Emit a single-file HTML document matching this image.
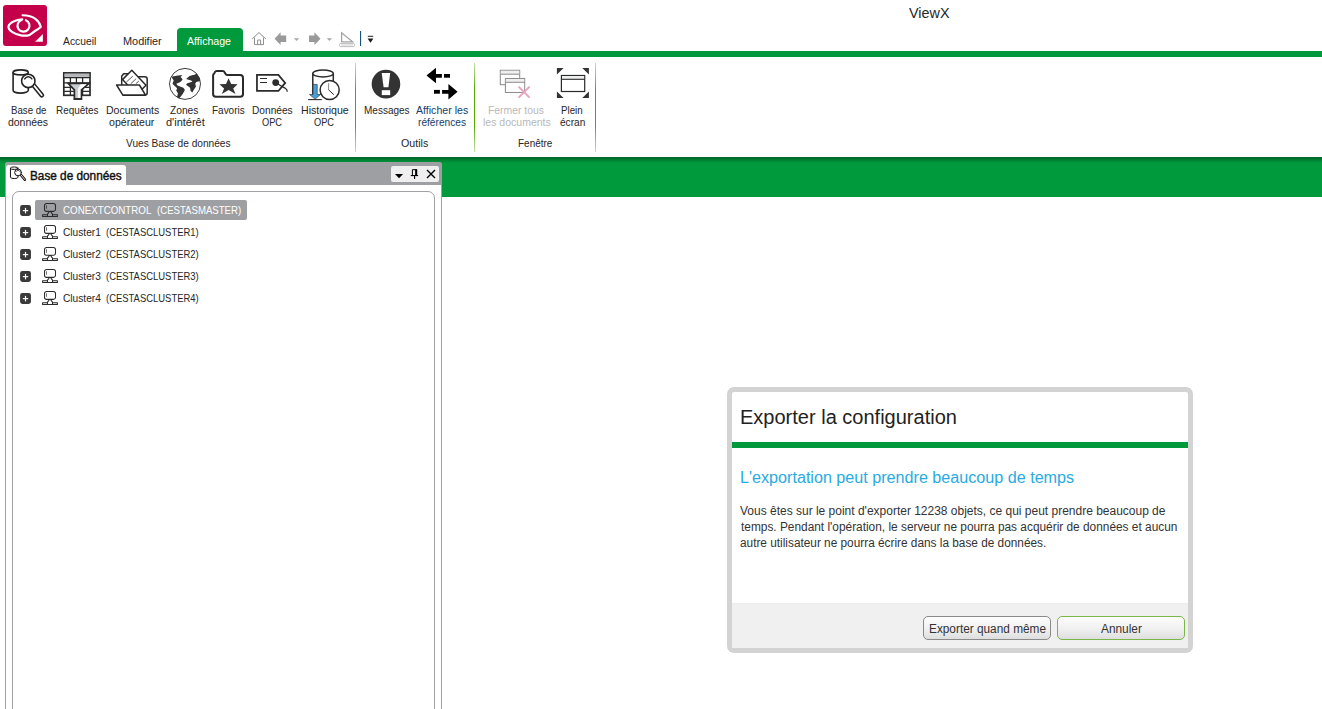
<!DOCTYPE html>
<html><head><meta charset="utf-8">
<style>
*{margin:0;padding:0;box-sizing:border-box}
html,body{width:1322px;height:709px;overflow:hidden;background:#fff}
body{position:relative;font-family:"Liberation Sans",sans-serif;color:#262626}
.a{position:absolute}
.t{position:absolute;white-space:pre;transform-origin:0 0;font-family:"Liberation Sans",sans-serif}
svg{position:absolute;overflow:visible}
</style></head><body>
<!-- logo -->
<div class="a" style="left:3px;top:5px;width:44px;height:41px;background:#c4004b;border-radius:3px"></div>
<!-- active tab + green rule -->
<div class="a" style="left:177px;top:28px;width:65.5px;height:24px;background:#009a3d;border-radius:4px 4px 0 0"></div>
<div class="a" style="left:0;top:51px;width:1322px;height:6px;background:#009a3d"></div>
<!-- ribbon separators -->
<div class="a sep" style="left:355px"></div><div class="a sep" style="left:474px"></div><div class="a sep" style="left:595px"></div>
<style>.sep{top:63px;width:1px;height:89px;background:linear-gradient(rgba(85,167,0,.35),#55a700 30%,#55a700 70%,rgba(85,167,0,.35))}</style>
<!-- green band -->
<div class="a" style="left:0;top:157px;width:1322px;height:40px;background:linear-gradient(#00662a 0,#00682a 1px,#007830 2px,#008836 4px,#009a3d 6px)"></div>
<!-- panel -->
<div class="a" style="left:5px;top:162px;width:436.5px;height:560px;background:#fff;border:1px solid #a0a1a5;border-radius:3px 3px 0 0"></div>
<div class="a" style="left:5px;top:162px;width:436.5px;height:22.5px;background:#9e9fa3;border-radius:3px 3px 0 0"></div>
<div class="a" style="left:6px;top:165px;width:120px;height:21px;background:#fff;border-radius:3px 3px 0 0"></div>
<div class="a" style="left:391px;top:165.8px;width:48px;height:16.3px;background:#efefef;border-radius:2px"></div>
<div class="a" style="left:12px;top:191px;width:423px;height:540px;border:1px solid #a0a1a5;border-radius:7px"></div>
<!-- tree selection -->
<div class="a" style="left:35px;top:200px;width:212px;height:20px;background:#9e9fa3;border-radius:2px"></div>
<!-- dialog -->
<div class="a" style="left:727px;top:387px;width:466px;height:266px;background:#d3d3d3;border-radius:7px"></div>
<div class="a" style="left:732px;top:392px;width:456px;height:256px;background:#fff;border-radius:2px"></div>
<div class="a" style="left:732px;top:442px;width:456px;height:6px;background:#009a3d"></div>
<div class="a" style="left:732px;top:603px;width:456px;height:45px;background:#f0f0f0;border-top:1px solid #ececec;border-radius:0 0 2px 2px"></div>
<div class="a" style="left:923px;top:616px;width:128px;height:24px;border:1px solid #8a8a8a;border-radius:5px;background:linear-gradient(#fdfdfd,#f0f0f0 55%,#dedede)"></div>
<div class="a" style="left:1057px;top:616px;width:128px;height:24px;border:1px solid #7ab648;border-radius:5px;background:linear-gradient(#fdfdfd,#f0f0f0 55%,#dedede)"></div>
<!-- logo eye -->
<svg style="left:0;top:0" width="52" height="52" viewBox="0 0 52 52" fill="none" stroke="#fff" stroke-width="2.15" stroke-linecap="round" stroke-linejoin="round">
<path d="M25.9 20.2A6 6 0 1 1 21.6 20"/>
<path d="M22.3 19.3C16.5 19.6 9.2 22.6 8.5 26.5C8.2 30.3 14.5 34.7 22 35.6L27.5 35.6C31.5 35.2 33 31.3 38.3 28.9L40.8 27C39.6 21.8 34.5 15.2 22.6 15.2"/>
<path d="M42.9 34.1V41.8H35.1Z" fill="#fff" stroke="none"/>
</svg>
<!-- quick access toolbar -->
<svg style="left:245px;top:26px" width="140" height="26" viewBox="245 26 140 26">
<path d="M252.2 38.9L259 32.6L265.8 38.9M254.5 37.5V44.6H263.5V37.5M257.6 44.6V40H260.6V44.6" fill="none" stroke="#8f8f8f" stroke-width="1"/>
<path d="M274.6 38.7L280.6 32.3V35.4H286.2V42H280.6V45Z" fill="#9a9a9a"/>
<path d="M293.8 38.2H299.2L296.5 41Z" fill="#a8a8a8"/>
<path d="M320.5 38.7L314.4 32.3V35.4H309V42H314.4V45Z" fill="#9a9a9a"/>
<path d="M326.7 38.2H332.1L329.4 41Z" fill="#a8a8a8"/>
<path d="M341.6 32.8V41.8H352.6Z" fill="none" stroke="#a3a3a3" stroke-width="1.3"/>
<rect x="339.6" y="43.6" width="14.8" height="3" rx="0.8" fill="#fff" stroke="#b5b5b5" stroke-width="0.9"/>
<path d="M342 44.3v1.6M344 44.3v1.6M346 44.3v1.6M348 44.3v1.6M350 44.3v1.6M352 44.3v1.6" stroke="#b5b5b5" stroke-width="0.7"/>
<rect x="360" y="31" width="1.1" height="15" fill="#14507a"/>
<rect x="367.8" y="35.8" width="5.4" height="1" fill="#222"/>
<path d="M367.6 38.6H373.4L370.5 42.8Z" fill="#1a1a1a"/>
</svg>
<!-- ribbon icon 1: database + magnifier -->
<svg style="left:6px;top:64px" width="44" height="40" viewBox="6 64 44 40" fill="none" stroke="#242424" stroke-width="1.6" stroke-linecap="round">
<ellipse cx="20.7" cy="72.4" rx="7.6" ry="2.5"/>
<path d="M13.1 72.5V90.2A7.6 2.9 0 0 0 28.3 90.2V87.5"/>
<path d="M33.8 85.4L41.8 95.2" stroke-width="4.8"/>
<path d="M33.8 85.4L41.8 95.2" stroke="#fff" stroke-width="1.7"/>
<circle cx="28.3" cy="80.9" r="6.7" fill="#fff"/>
<path d="M24.7 78.9A4.1 4.1 0 0 1 31.9 78.9" stroke-width="1.4"/>
</svg>
<!-- ribbon icon 2: table + funnel -->
<svg style="left:56px;top:64px" width="44" height="40" viewBox="56 64 44 40" fill="none" stroke="#2a2a2a" stroke-width="1.5">
<rect x="63.8" y="72.9" width="26.2" height="22.4" fill="#fff" stroke-width="1.7"/>
<rect x="64.6" y="73.7" width="24.6" height="3.2" fill="#b4b6b9" stroke="none"/>
<path d="M64 77.6H90M64 82.9H90M64 87.4H90M64 91.3H90" stroke-width="1.3"/>
<path d="M70.4 77.6V95M76.4 77.6V95M82.6 77.6V95" stroke-width="1.3"/>
<path d="M68.1 83.3H89.1L81.4 89.9V98.9H74.4V89.9Z" fill="#c9cdd0" stroke-linejoin="miter" stroke-width="1.7"/>
<path d="M80.6 84.3H86.6L80.4 89.5V98H78.2V88.5Z" fill="#fff" stroke="none"/>
<path d="M73.6 99.2H82.2" stroke-width="1.4"/>
</svg>
<!-- ribbon icon 3: folder with documents -->
<svg style="left:110px;top:64px" width="44" height="40" viewBox="110 64 44 40" fill="#fff" stroke="#2a2a2a" stroke-width="1.5" stroke-linejoin="round">
<path d="M121.7 85V76.2L123.6 73.7H128.6L131 76.8H144.8A2.4 2.4 0 0 1 147.2 79.2V92.8A2.4 2.4 0 0 1 144.8 95.2H123Z"/>
<path d="M131.8 70.3L146 85.2L136.8 94.5L122.5 79.6Z"/>
<path d="M126.4 82L132.8 76.1M130.9 83.7L135.9 78.9M135.9 83.7L138.8 81.1" stroke-width="0.8"/>
<path d="M116.6 85H139.4L145.4 94.9H122.7Z"/>
</svg>
<!-- ribbon icon 4: globe -->
<svg style="left:163px;top:64px" width="44" height="40" viewBox="163 64 44 40">
<defs><clipPath id="gc"><circle cx="185" cy="83.9" r="15.6"/></clipPath></defs>
<circle cx="185" cy="83.9" r="15.5" fill="#fff" stroke="#333" stroke-width="0.95"/>
<g clip-path="url(#gc)" fill="#333">
<path d="M171.3 76.8Q176 75.6 182.3 74.9L180.6 77.1L182.6 79.2Q181.8 81.2 179.9 82.2L176.3 83.7Q177 85.4 178.8 86L183.3 87.7Q185.2 89 184.7 90.6L182.7 94L179.4 98.3L176.9 97.5L177.9 93.3L176.2 90.5L177.1 88.3L173.7 85L172.5 83.7L173.7 80.4Z"/>
<path d="M186.1 78.9L189.5 76.1Q192 75 194.6 74.7L197 73.3L201 79.8L199.3 81.2L196.3 82.1L195.2 83.7L196 86.6L194 89.4L192.3 92.6L190.6 91.1L190.1 87.7L186 84.7L187.3 83.2L192.4 81.8L191.2 80.4Z"/>
</g>
</svg>
<!-- ribbon icon 5: favourites folder -->
<svg style="left:206px;top:64px" width="44" height="40" viewBox="206 64 44 40">
<path d="M213.1 75.2Q213.1 74.2 214.2 73.6L215 71.9Q215.5 70.9 216.8 70.9H222.6Q224 70.9 224.6 72.2L225.6 73.9Q226.3 75.1 227.8 75.1H240.2A2.8 2.8 0 0 1 243 77.9V94A2.8 2.8 0 0 1 240.2 96.8H215.9A2.8 2.8 0 0 1 213.1 94Z" fill="#fff" stroke="#2a2a2a" stroke-width="2" stroke-linejoin="round"/>
<path d="M228.6 78.3L231.2 84.1L237.6 84.3L233.2 88.4L235.5 93.9L228.6 90L221.8 93.9L224.1 88.4L219.4 84.3L226 84.1Z" fill="#333"/>
</svg>
<!-- ribbon icon 6: tag -->
<svg style="left:250px;top:64px" width="44" height="40" viewBox="250 64 44 40" fill="none" stroke="#2a2a2a">
<path d="M256.95 74.85H278.4L285.2 82.9L278.4 90.95H256.95Z" stroke-width="1.75" fill="#fff"/>
<path d="M260.1 78.55H267M260.1 82.45H267" stroke-width="1.1"/>
<circle cx="275.7" cy="82.6" r="3.4" fill="#2e2e2e" stroke="none"/>
<path d="M277.5 83.6C281 86.2 283 87 285.3 88.3C286.8 89.2 287.3 90.3 287.3 91.8" stroke-width="1.25"/>
</svg>
<!-- ribbon icon 7: historian cylinder + clock -->
<svg style="left:302px;top:64px" width="44" height="40" viewBox="302 64 44 40" fill="none" stroke="#2a2a2a" stroke-width="1.5">
<path d="M312.8 73.4V95M333.3 73.4V84"/>
<ellipse cx="323.05" cy="73.4" rx="10.25" ry="3.5" fill="#fff"/>
<path d="M313.1 84.4H317.2V94.5H320.6L315.1 99.1L309.5 94.5H313.1Z" fill="#4a9fd8" stroke="#3a3a3a" stroke-width="0.7"/>
<path d="M308.1 99.6H321.8" stroke-width="1.1"/>
<circle cx="329.65" cy="89.95" r="9.55" fill="#fff"/>
<path d="M328.6 83.2V89.9" stroke="#8a8a8a" stroke-width="1"/>
<path d="M328.6 89.9L333.9 94.7" stroke-width="1"/>
</svg>
<!-- ribbon icon 8: messages -->
<svg style="left:362px;top:62px" width="104" height="42" viewBox="362 62 104 42">
<circle cx="385.95" cy="84.1" r="14.3" fill="#333"/>
<path d="M381.7 73H390.2L388.4 87.2H383.6Z" fill="#fff"/>
<rect x="381.8" y="90.2" width="8.4" height="4.9" fill="#fff"/>
<!-- ribbon icon 9: reference arrows -->
<path d="M426.5 75.55L436 67.8V74H441.9V77.7H436V83.3Z" fill="#000"/>
<rect x="444" y="74" width="6" height="3.7" fill="#000"/>
<rect x="434" y="89.9" width="5.9" height="3.8" fill="#000"/>
<path d="M457.6 91.75L448.4 84.1V89.9H442.1V93.7H448.4V99.4Z" fill="#000"/>
</svg>
<!-- ribbon icon 10: close all (disabled) + icon 11: full screen -->
<svg style="left:492px;top:62px" width="104" height="42" viewBox="492 62 104 42" fill="none">
<rect x="500.3" y="70.3" width="19.4" height="14.4" fill="#fff" stroke="#8f8f8f" stroke-width="1.05"/>
<rect x="500.8" y="70.8" width="18.4" height="3.2" fill="#eef0f0"/>
<path d="M500.3 74.2H519.7" stroke="#8f8f8f" stroke-width="1.05"/>
<rect x="505.4" y="78.5" width="19.3" height="14" fill="#fff" stroke="#8f8f8f" stroke-width="1.05"/>
<rect x="505.9" y="79" width="18.3" height="3.1" fill="#eef0f0"/>
<path d="M505.4 82.3H524.7" stroke="#8f8f8f" stroke-width="1.05"/>
<path d="M518.6 86.6L529.6 97.6M529.6 86.6L518.6 97.6" stroke="#e9a3bf" stroke-width="2"/>
<rect x="561.4" y="75.5" width="23.3" height="16" fill="#fff" stroke="#2a2a2a" stroke-width="1.2"/>
<rect x="562" y="76.1" width="22.1" height="2.9" fill="#eef0f0"/>
<path d="M561.4 79.3H584.7" stroke="#2a2a2a" stroke-width="1.1"/>
<path d="M556.9 68.1H563.6L556.9 74.6ZM582.3 68.1H588.9V74.6ZM556.9 91.5V98H563.6ZM588.9 91.5V98H582.3Z" fill="#333"/>
</svg>
<!-- panel tab icon (small database + magnifier) -->
<svg style="left:8px;top:164px" width="20" height="20" viewBox="8 164 20 20">
<g transform="translate(3.9 132) scale(0.5)" fill="none" stroke="#111" stroke-width="2" stroke-linecap="round">
<ellipse cx="20.7" cy="72.4" rx="7.6" ry="2.5"/>
<path d="M13.1 72.5V90.2A7.6 2.9 0 0 0 28.3 90.2V87.5"/>
<path d="M33.8 85.4L41.9 95.3" stroke-width="5.2"/>
<path d="M33.8 85.4L41.9 95.3" stroke="#fff" stroke-width="1.6"/>
<circle cx="28.3" cy="80.9" r="6.7" fill="#fff"/>
<path d="M24.7 78.9A4.1 4.1 0 0 1 31.9 78.9" stroke-width="1.4"/>
</g></svg>
<!-- panel header buttons -->
<svg style="left:388px;top:162px" width="56" height="24" viewBox="388 162 56 24">
<path d="M395 174.1H403.1L399.05 178.2Z" fill="#000"/>
<path d="M412.4 175.3V169.7H416.2V175.3" fill="none" stroke="#000" stroke-width="1"/>
<rect x="415.2" y="169.2" width="2" height="6.3" fill="#000"/>
<rect x="410.8" y="175" width="7.3" height="1.1" fill="#000"/>
<rect x="414" y="176" width="1.1" height="3" fill="#000"/>
<path d="M427 170.1L435 177.9M435 170.1L427 177.9" stroke="#000" stroke-width="1.35"/>
</svg>
<!-- tree expanders + computer icons -->
<svg style="left:0;top:195px" width="70" height="115" viewBox="0 195 70 115">
<g transform="translate(0 210.5)">
<rect x="20.1" y="-5.45" width="10.85" height="10.85" rx="2.3" fill="#3a3a3a"/>
<rect x="22.8" y="-0.45" width="5.4" height="1.15" fill="#fff"/><rect x="24.92" y="-2.6" width="1.2" height="5.45" fill="#fff"/>
<g fill="none" stroke="#2b2b2b" stroke-width="1.05" stroke-linejoin="round">
<rect x="44.5" y="-7.05" width="11" height="7.9" rx="2.1"/>
<path d="M46.45 -5.2V-1.7" stroke-width="0.7"/>
<path d="M47.5 4.15H42.6V5.95H47.5M52.5 4.15H57.4V5.95H52.5"/>
<path d="M48.9 1V1.9L47.5 3.6V5.95H52.5V3.6L51.1 1.9V1Z"/>
</g>
</g>
<g transform="translate(0 232.5)">
<rect x="20.1" y="-5.45" width="10.85" height="10.85" rx="2.3" fill="#3a3a3a"/>
<rect x="22.8" y="-0.45" width="5.4" height="1.15" fill="#fff"/><rect x="24.92" y="-2.6" width="1.2" height="5.45" fill="#fff"/>
<g fill="none" stroke="#2b2b2b" stroke-width="1.05" stroke-linejoin="round">
<rect x="44.5" y="-7.05" width="11" height="7.9" rx="2.1"/>
<path d="M46.45 -5.2V-1.7" stroke-width="0.7"/>
<path d="M47.5 4.15H42.6V5.95H47.5M52.5 4.15H57.4V5.95H52.5"/>
<path d="M48.9 1V1.9L47.5 3.6V5.95H52.5V3.6L51.1 1.9V1Z"/>
</g>
</g>
<g transform="translate(0 254.5)">
<rect x="20.1" y="-5.45" width="10.85" height="10.85" rx="2.3" fill="#3a3a3a"/>
<rect x="22.8" y="-0.45" width="5.4" height="1.15" fill="#fff"/><rect x="24.92" y="-2.6" width="1.2" height="5.45" fill="#fff"/>
<g fill="none" stroke="#2b2b2b" stroke-width="1.05" stroke-linejoin="round">
<rect x="44.5" y="-7.05" width="11" height="7.9" rx="2.1"/>
<path d="M46.45 -5.2V-1.7" stroke-width="0.7"/>
<path d="M47.5 4.15H42.6V5.95H47.5M52.5 4.15H57.4V5.95H52.5"/>
<path d="M48.9 1V1.9L47.5 3.6V5.95H52.5V3.6L51.1 1.9V1Z"/>
</g>
</g>
<g transform="translate(0 276.5)">
<rect x="20.1" y="-5.45" width="10.85" height="10.85" rx="2.3" fill="#3a3a3a"/>
<rect x="22.8" y="-0.45" width="5.4" height="1.15" fill="#fff"/><rect x="24.92" y="-2.6" width="1.2" height="5.45" fill="#fff"/>
<g fill="none" stroke="#2b2b2b" stroke-width="1.05" stroke-linejoin="round">
<rect x="44.5" y="-7.05" width="11" height="7.9" rx="2.1"/>
<path d="M46.45 -5.2V-1.7" stroke-width="0.7"/>
<path d="M47.5 4.15H42.6V5.95H47.5M52.5 4.15H57.4V5.95H52.5"/>
<path d="M48.9 1V1.9L47.5 3.6V5.95H52.5V3.6L51.1 1.9V1Z"/>
</g>
</g>
<g transform="translate(0 298.5)">
<rect x="20.1" y="-5.45" width="10.85" height="10.85" rx="2.3" fill="#3a3a3a"/>
<rect x="22.8" y="-0.45" width="5.4" height="1.15" fill="#fff"/><rect x="24.92" y="-2.6" width="1.2" height="5.45" fill="#fff"/>
<g fill="none" stroke="#2b2b2b" stroke-width="1.05" stroke-linejoin="round">
<rect x="44.5" y="-7.05" width="11" height="7.9" rx="2.1"/>
<path d="M46.45 -5.2V-1.7" stroke-width="0.7"/>
<path d="M47.5 4.15H42.6V5.95H47.5M52.5 4.15H57.4V5.95H52.5"/>
<path d="M48.9 1V1.9L47.5 3.6V5.95H52.5V3.6L51.1 1.9V1Z"/>
</g>
</g>
</svg>
<div class="t" id="tTitle" style="left:909.10px;top:-2.00px;font-size:15px;line-height:30px;transform:scaleX(0.9588);color:#262626;">ViewX</div>
<div class="t" id="tAcc" style="left:63.30px;top:30.00px;font-size:11.2px;line-height:22px;transform:scaleX(0.9219);color:#262626;">Accueil</div>
<div class="t" id="tMod" style="left:122.60px;top:30.00px;font-size:11.2px;line-height:22px;transform:scaleX(0.9734);color:#262626;">Modifier</div>
<div class="t" id="tAff" style="left:187.40px;top:30.00px;font-size:11.2px;line-height:22px;transform:scaleX(0.9476);color:#ffffff;">Affichage</div>
<div class="t" id="r1a" style="left:10.60px;top:100.00px;font-size:10.4px;line-height:21px;transform:scaleX(0.9309);color:#262626;">Base de</div>
<div class="t" id="r1b" style="left:8.40px;top:112.00px;font-size:10.4px;line-height:21px;transform:scaleX(1.0057);color:#262626;">données</div>
<div class="t" id="r2a" style="left:55.60px;top:100.00px;font-size:10.4px;line-height:21px;transform:scaleX(0.9574);color:#262626;">Requêtes</div>
<div class="t" id="r3a" style="left:105.50px;top:100.00px;font-size:10.4px;line-height:21px;transform:scaleX(1.0142);color:#262626;">Documents</div>
<div class="t" id="r3b" style="left:109.30px;top:112.00px;font-size:10.4px;line-height:21px;transform:scaleX(1.0196);color:#262626;">opérateur</div>
<div class="t" id="r4a" style="left:169.90px;top:100.00px;font-size:10.4px;line-height:21px;transform:scaleX(0.9831);color:#262626;">Zones</div>
<div class="t" id="r4b" style="left:165.60px;top:112.00px;font-size:10.4px;line-height:21px;transform:scaleX(1.0584);color:#262626;">d'intérêt</div>
<div class="t" id="r5a" style="left:212.30px;top:100.00px;font-size:10.4px;line-height:21px;transform:scaleX(0.9596);color:#262626;">Favoris</div>
<div class="t" id="r6a" style="left:251.70px;top:100.00px;font-size:10.4px;line-height:21px;transform:scaleX(0.9783);color:#262626;">Données</div>
<div class="t" id="r6b" style="left:261.70px;top:112.00px;font-size:10.4px;line-height:21px;transform:scaleX(0.8908);color:#262626;">OPC</div>
<div class="t" id="r7a" style="left:300.60px;top:100.00px;font-size:10.4px;line-height:21px;transform:scaleX(1.0213);color:#262626;">Historique</div>
<div class="t" id="r7b" style="left:314.40px;top:112.00px;font-size:10.4px;line-height:21px;transform:scaleX(0.8908);color:#262626;">OPC</div>
<div class="t" id="r8a" style="left:363.50px;top:100.00px;font-size:10.4px;line-height:21px;transform:scaleX(0.9627);color:#262626;">Messages</div>
<div class="t" id="r9a" style="left:416.10px;top:100.00px;font-size:10.4px;line-height:21px;transform:scaleX(1.0194);color:#123e6c;">Afficher les</div>
<div class="t" id="r9b" style="left:418.40px;top:112.00px;font-size:10.4px;line-height:21px;transform:scaleX(0.9776);color:#123e6c;">références</div>
<div class="t" id="r10a" style="left:488.30px;top:100.00px;font-size:10.4px;line-height:21px;transform:scaleX(0.9998);color:#b9b9b9;">Fermer tous</div>
<div class="t" id="r10b" style="left:482.60px;top:112.00px;font-size:10.4px;line-height:21px;transform:scaleX(1.0120);color:#b9b9b9;">les documents</div>
<div class="t" id="r11a" style="left:561.10px;top:100.00px;font-size:10.4px;line-height:21px;transform:scaleX(0.9346);color:#262626;">Plein</div>
<div class="t" id="r11b" style="left:560.20px;top:112.00px;font-size:10.4px;line-height:21px;transform:scaleX(0.9728);color:#262626;">écran</div>
<div class="t" id="g1" style="left:125.50px;top:133.00px;font-size:10.4px;line-height:21px;transform:scaleX(0.9769);color:#262626;">Vues Base de données</div>
<div class="t" id="g2" style="left:401.30px;top:133.00px;font-size:10.4px;line-height:21px;transform:scaleX(1.0279);color:#262626;">Outils</div>
<div class="t" id="g3" style="left:517.60px;top:133.00px;font-size:10.4px;line-height:21px;transform:scaleX(0.9603);color:#262626;">Fenêtre</div>
<div class="t" id="pTab" style="left:29.64px;top:164.00px;font-size:12.3px;line-height:25px;transform:scaleX(0.9580);color:#111;-webkit-text-stroke:0.4px #111;">Base de données</div>
<div class="t" id="n0a" style="left:62.60px;top:199.00px;font-size:11px;line-height:22px;transform:scaleX(0.8864);color:#ffffff;">CONEXTCONTROL</div>
<div class="t" id="n0b" style="left:156.60px;top:199.00px;font-size:11px;line-height:22px;transform:scaleX(0.8726);color:#ffffff;">(CESTASMASTER)</div>
<div class="t" id="n1a" style="left:62.60px;top:221.00px;font-size:11px;line-height:22px;transform:scaleX(0.9231);color:#262626;">Cluster1</div>
<div class="t" id="n1b" style="left:106.30px;top:221.00px;font-size:11px;line-height:22px;transform:scaleX(0.8582);color:#262626;">(CESTASCLUSTER1)</div>
<div class="t" id="n2a" style="left:62.60px;top:243.00px;font-size:11px;line-height:22px;transform:scaleX(0.9231);color:#262626;">Cluster2</div>
<div class="t" id="n2b" style="left:106.30px;top:243.00px;font-size:11px;line-height:22px;transform:scaleX(0.8582);color:#262626;">(CESTASCLUSTER2)</div>
<div class="t" id="n3a" style="left:62.60px;top:265.00px;font-size:11px;line-height:22px;transform:scaleX(0.9231);color:#262626;">Cluster3</div>
<div class="t" id="n3b" style="left:106.30px;top:265.00px;font-size:11px;line-height:22px;transform:scaleX(0.8582);color:#262626;">(CESTASCLUSTER3)</div>
<div class="t" id="n4a" style="left:62.60px;top:287.00px;font-size:11px;line-height:22px;transform:scaleX(0.9231);color:#262626;">Cluster4</div>
<div class="t" id="n4b" style="left:106.30px;top:287.00px;font-size:11px;line-height:22px;transform:scaleX(0.8582);color:#262626;">(CESTASCLUSTER4)</div>
<div class="t" id="dTitle" style="left:739.88px;top:398.00px;font-size:19.6px;line-height:39px;transform:scaleX(1.0214);color:#222;">Exporter la configuration</div>
<div class="t" id="dHead" style="left:739.89px;top:462.00px;font-size:16px;line-height:32px;transform:scaleX(1.0085);color:#29abe2;">L'exportation peut prendre beaucoup de temps</div>
<div class="t" id="dL1" style="left:740.20px;top:499.00px;font-size:12px;line-height:24px;transform:scaleX(0.9989);color:#333;">Vous êtes sur le point d'exporter 12238 objets, ce qui peut prendre beaucoup de</div>
<div class="t" id="dL2" style="left:740.60px;top:515.00px;font-size:12px;line-height:24px;transform:scaleX(0.9890);color:#333;">temps. Pendant l'opération, le serveur ne pourra pas acquérir de données et aucun</div>
<div class="t" id="dL3" style="left:740.40px;top:531.00px;font-size:12px;line-height:24px;transform:scaleX(0.9851);color:#333;">autre utilisateur ne pourra écrire dans la base de données.</div>
<div class="t" id="b1" style="left:928.70px;top:617.00px;font-size:12px;line-height:24px;transform:scaleX(0.9853);color:#333;">Exporter quand même</div>
<div class="t" id="b2" style="left:1100.80px;top:617.00px;font-size:12px;line-height:24px;transform:scaleX(0.9888);color:#333;">Annuler</div>
</body></html>
